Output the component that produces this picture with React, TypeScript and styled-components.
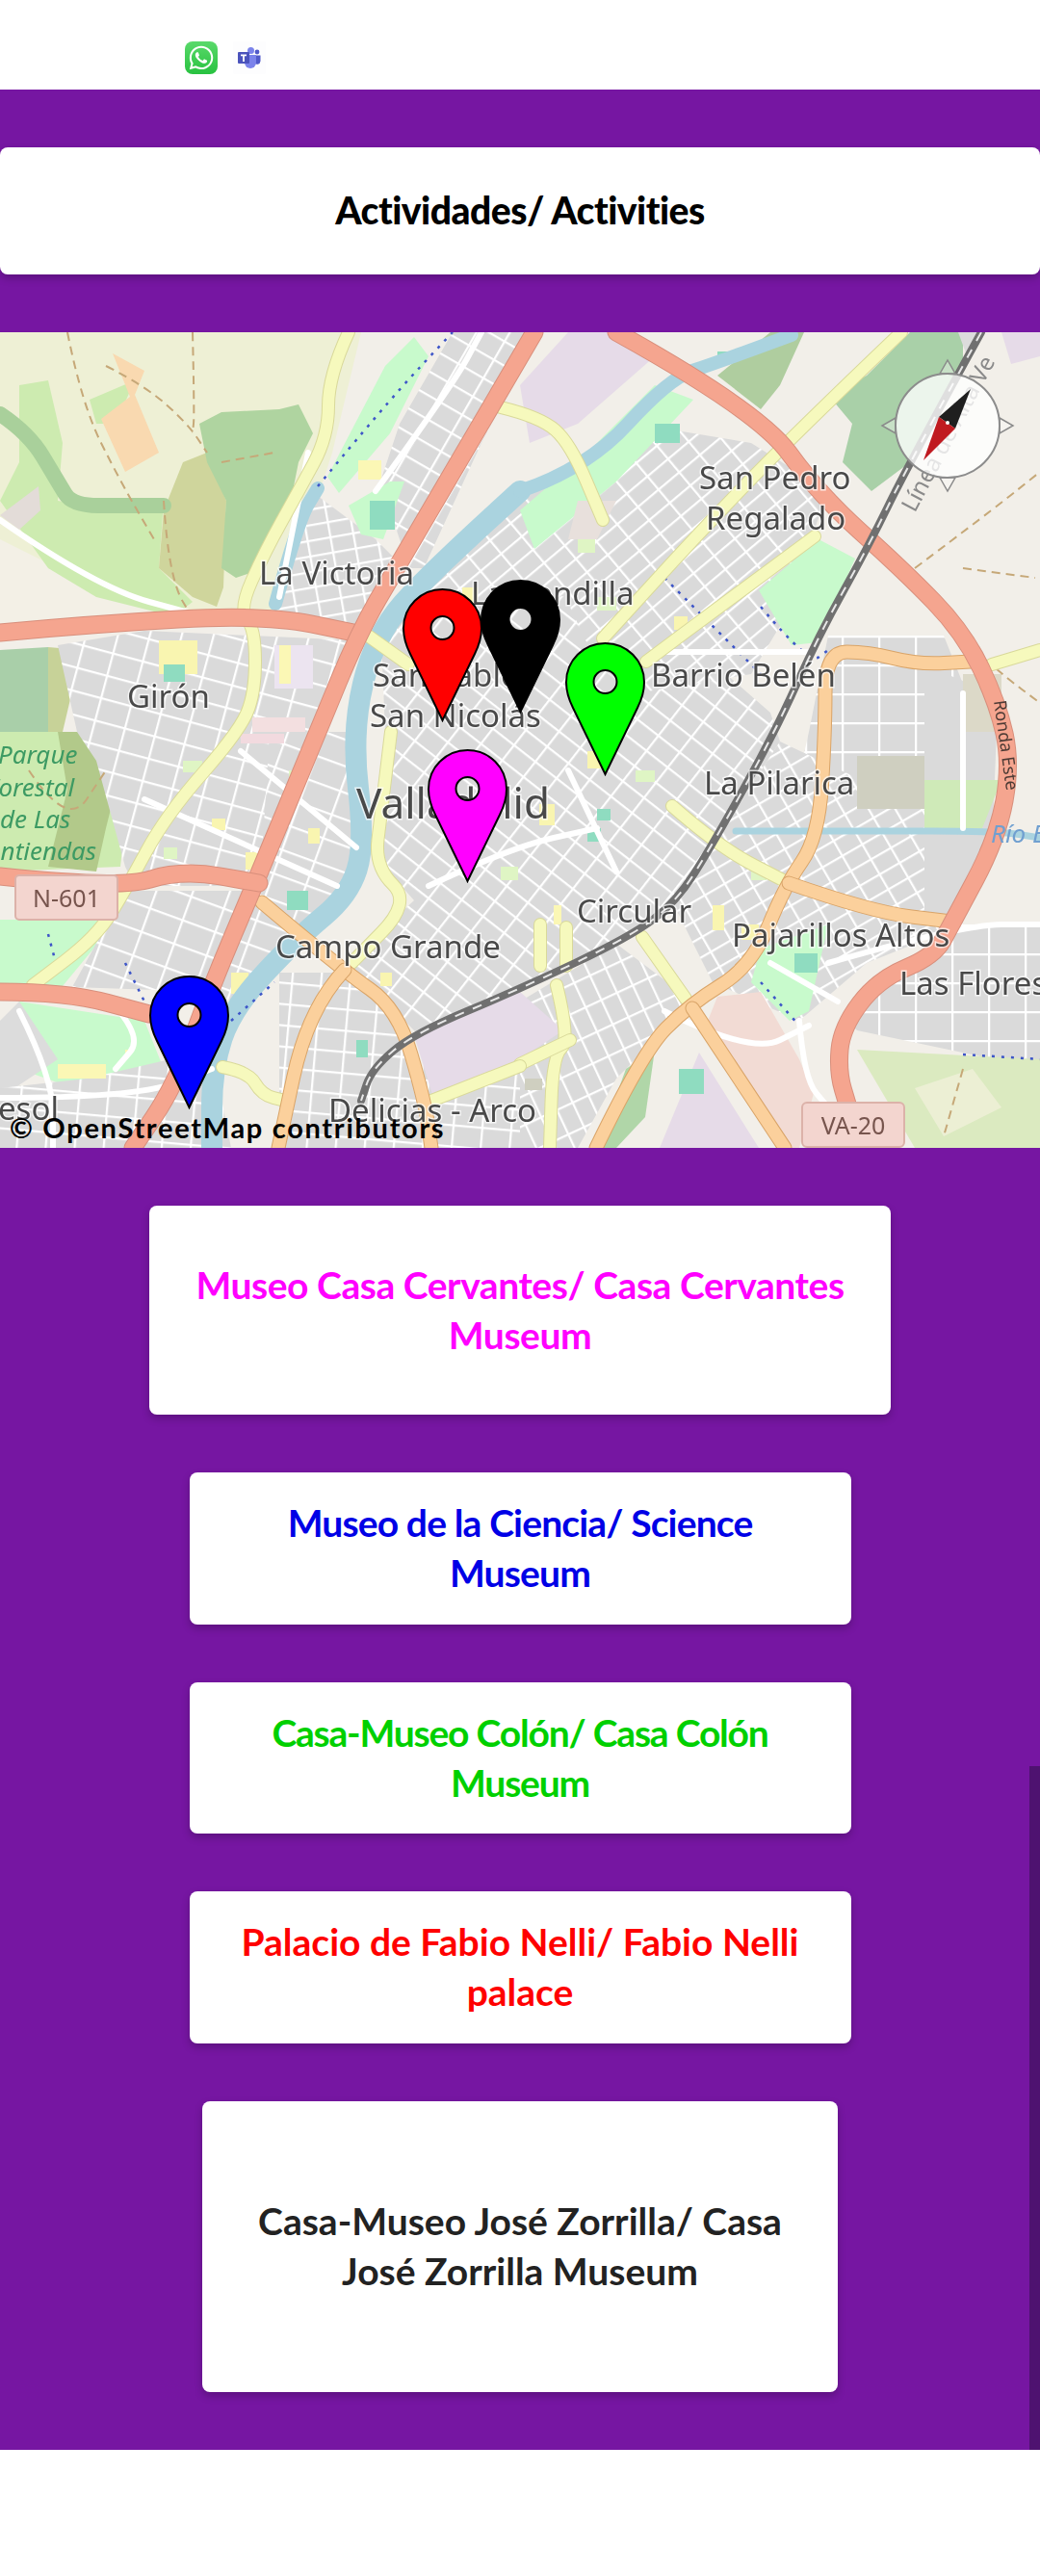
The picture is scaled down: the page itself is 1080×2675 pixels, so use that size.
import React from 'react'
import styled, { createGlobalStyle } from 'styled-components'
import { FaWhatsapp } from 'react-icons/fa'

const GlobalStyle = createGlobalStyle`
	html, body {
		margin: 0;
		background: #fff;
	}
`

const Page = styled.div`
	min-height: 2675px;
	background: #fff;
	font-family: 'Lato', 'Liberation Sans', sans-serif;
`

const Header = styled.header`
	align-items: flex-start;
	box-sizing: border-box;
	display: flex;
	gap: 16px;
	height: 93px;
	padding-left: 192px;
	padding-top: 43px;
`

const AppIcon = styled.a`
	align-items: center;
	border-radius: 8px;
	display: flex;
	height: 34px;
	justify-content: center;
	width: 34px;
`

const WhatsApp = styled(AppIcon)`
	background: linear-gradient(#5ad96b, #28c240);
	color: #fff;
	font-size: 28px;
`

const Teams = styled(AppIcon)`
	background: #fdfdfe;
	border-radius: 2px;
`

const Content = styled.main`
	align-items: center;
	background: #7616a2;
	display: flex;
	flex-direction: column;
	gap: 60px;
	padding-block: 60px;
	position: relative;
`

const Card = styled.div<{ $width: string; $height: number; $color: string; $tracking: number }>`
	align-items: center;
	background: #fff;
	border-radius: 8px;
	box-shadow: 0 4px 8px rgba(0, 0, 0, 0.22);
	box-sizing: border-box;
	color: ${(p) => p.$color};
	display: flex;
	flex-direction: column;
	font-size: 39px;
	font-weight: 700;
	height: ${(p) => p.$height}px;
	justify-content: center;
	letter-spacing: ${(p) => p.$tracking}px;
	line-height: 52px;
	padding-bottom: 2px;
	text-align: center;
	width: ${(p) => p.$width};
`

const CardLine = styled.span`
	display: block;
	white-space: nowrap;
`

const TitleCard = styled(Card)`
	font-weight: 900;
`

const ScrollThumb = styled.div`
	background: #4e1270;
	bottom: 0;
	position: absolute;
	right: 0;
	top: 1741px;
	width: 11px;
`

const MapFrame = styled.section`
	height: 847px;
	overflow: hidden;
	position: relative;
	width: 100%;
`

const MapCanvas = styled.svg`
	display: block;
	height: 847px;
	width: 1080px;
`

const Road = styled.path<{ $color: string; $width: number; $dash?: string }>`
	fill: none;
	stroke: ${(p) => p.$color};
	stroke-dasharray: ${(p) => p.$dash || 'none'};
	stroke-linecap: ${(p) => (p.$dash ? 'butt' : 'round')};
	stroke-linejoin: round;
	stroke-width: ${(p) => p.$width};
`

const PlaceName = styled.text<{ $size?: number }>`
	fill: #4a4a4a;
	font-family: 'Noto Sans', sans-serif;
	font-size: ${(p) => p.$size || 33}px;
	paint-order: stroke;
	stroke: rgba(255, 255, 255, 0.7);
	stroke-width: 3px;
`

const ParkName = styled.text`
	fill: #3c9a63;
	font-family: 'Noto Sans', sans-serif;
	font-size: 26px;
	font-style: italic;
`

const RiverName = styled(ParkName)`
	fill: #6f9fd0;
`

const LineName = styled.text<{ $color: string; $size: number }>`
	fill: ${(p) => p.$color};
	font-family: 'Noto Sans', sans-serif;
	font-size: ${(p) => p.$size}px;
`

const ShieldText = styled.text`
	fill: #77544e;
	font-family: 'Noto Sans', sans-serif;
	font-size: 25px;
	text-anchor: middle;
`

const PinIcon = styled.svg<{ $x: number; $y: number }>`
	height: 139px;
	left: ${(p) => p.$x}px;
	position: absolute;
	top: ${(p) => p.$y - 345}px;
	width: 83px;
`

const Compass = styled.svg`
	height: 140px;
	left: 914px;
	position: absolute;
	top: 27px;
	width: 140px;
`

const Attribution = styled.div`
	bottom: 3px;
	color: #000;
	font-family: 'Lato', sans-serif;
	font-size: 29px;
	font-weight: 700;
	left: 10px;
	letter-spacing: 1.7px;
	line-height: 36px;
	position: absolute;
	white-space: nowrap;
`

// draws a list of points as a soft curve through the midpoints
const smooth = (pts: number[][]) => {
	let d = `M${pts[0][0]} ${pts[0][1]}`
	for (let i = 1; i < pts.length - 1; i++) {
		const mx = (pts[i][0] + pts[i + 1][0]) / 2
		const my = (pts[i][1] + pts[i + 1][1]) / 2
		d += ` Q${pts[i][0]} ${pts[i][1]} ${mx} ${my}`
	}
	const last = pts[pts.length - 1]
	return `${d} L${last[0]} ${last[1]}`
}

const shape = (pts: string) => `M${pts}Z`

const hatches = [
	{ id: 'h1', angle: -10, w: 24, h: 16 },
	{ id: 'h2', angle: 30, w: 30, h: 22 },
	{ id: 'h3', angle: 15, w: 32, h: 24 },
	{ id: 'h4', angle: 20, w: 36, h: 26 },
	{ id: 'h5', angle: 38, w: 28, h: 20 },
	{ id: 'h6', angle: -40, w: 28, h: 18 },
	{ id: 'h7', angle: 0, w: 38, h: 30 },
	{ id: 'h8', angle: -30, w: 24, h: 18 },
	{ id: 'h9', angle: -25, w: 18, h: 28 },
	{ id: 'h10', angle: 5, w: 30, h: 22 },
]

const districts = [
	['h1', '300,560 330,515 390,560 420,590 375,655 280,640'],
	['h2', '395,500 415,440 470,345 560,345 500,460 440,590 425,590'],
	['h3', '60,670 150,655 370,665 340,760 250,920 140,920 130,900 100,790 80,760'],
	['h4', '130,925 265,925 220,1030 75,1025'],
	['h4', '280,760 365,760 380,880 360,930 300,980 240,1040 225,1030 270,920'],
	['h5', '395,640 640,600 800,740 810,770 700,940 650,975 540,1030 440,1080 400,1040 360,1000 430,935 390,890 400,760'],
	['h6', '540,520 620,500 690,445 780,460 860,510 810,650 780,700 660,720 620,690'],
	['h6', '440,590 540,510 620,500 640,610 395,650'],
	['h7', '860,660 980,660 1020,760 1000,850 820,850 840,760'],
	['h8', '700,940 810,770 1000,860 1000,960 900,1000 830,1060 740,1020'],
	['h7', '990,960 1080,960 1080,1110 890,1070 880,1060 950,1000'],
	['h9', '540,1040 640,980 720,1040 640,1120 600,1192 540,1192'],
	['h10', '290,1010 360,1010 420,1060 440,1192 290,1192'],
	['h10', '0,1130 90,1120 220,1090 240,1192 0,1192'],
	['h10', '440,1080 540,1030 540,1192 440,1192'],
]

const areas = [
	// rural west
	['#eef0d5', '0,345 375,345 345,470 290,640 0,660'],
	['#f3f0e6', '0,560 120,620 230,640 0,655'],
	['#cdebb0', '0,520 20,480 20,400 50,395 65,460 60,520 120,530 170,520 165,590 200,625 180,640 100,620 50,590'],
	['#cdebb0', '93,415 140,395 120,440 100,440'],
	['#cfd59c', '190,480 215,470 235,520 232,610 225,630 200,620 165,590 170,530'],
	['#afd4a0', '207,440 230,428 290,425 310,420 325,450 310,480 300,530 275,590 245,600 230,590 235,520 215,480'],
	['#f9d9b0', '117,367 150,385 140,410 165,470 130,490 105,435 135,412'],
	['#e3dcd8', '0,535 40,505 42,530 20,550'],
	// west below the ring
	['#a9cfa9', '0,675 50,672 50,760 0,760'],
	['#c7d298', '50,672 85,675 65,760 50,760'],
	['#cdebb0', '0,760 140,760 125,900 0,905'],
	['#b2c98a', '60,760 135,760 110,860 100,905 50,900 70,820'],
	['#c8facc', '0,955 122,955 60,1030 0,1030'],
	['#c8facc', '20,1040 150,1060 170,1110 90,1135 20,1110'],
	['#dcdcdc', '0,1060 20,1040 60,1100 0,1140'],
	// parks and special land
	['#e6dbe8', '540,400 590,345 650,345 680,370 600,440 550,460'],
	['#c8facc', '540,530 610,470 680,400 720,415 640,500 555,570'],
	['#c8facc', '340,495 400,380 430,350 445,370 405,450 352,512'],
	['#c8facc', '362,525 405,500 420,500 398,560 375,555'],
	['#c8facc', '788,613 850,560 888,580 850,667 822,670'],
	['#e8e0dc', '600,520 640,520 620,560 590,560'],
	['#a9d0a8', '945,345 1000,345 1000,380 945,480 905,510 875,480 885,440 860,410 900,390'],
	['#afcd9f', '745,390 800,345 835,345 810,400 790,425'],
	['#e6dbe8', '1040,345 1080,345 1080,370 1050,378'],
	['#dcdcdc', '995,345 1020,345 1005,372'],
	['#dadada', '960,690 1030,720 1035,760 1030,880 1000,950 960,950'],
	['#cfeab8', '960,810 1040,810 1020,860 960,860'],
	['#cfcfc0', '890,785 960,785 960,840 890,840'],
	['#e6dbe8', '430,1075 540,1030 540,1105 450,1140'],
	['#e6dbe8', '540,1030 585,1070 540,1100'],
	['#e6dbe8', '685,1192 726,1093 788,1192'],
	['#f2dbd4', '745,1035 790,1030 830,1100 845,1135 830,1192 810,1192 735,1060'],
	['#c8facc', '790,985 860,960 840,1050 820,1060 780,1020'],
	['#dbeac0', '890,1090 1080,1100 1080,1192 950,1192'],
	['#ecefd4', '950,1130 1010,1110 1040,1150 980,1180'],
	['#dcd9c8', '1000,700 1040,700 1040,760 1000,760'],
	['#b0d6a8', '650,1110 680,1090 670,1160 640,1192 620,1192'],
]

const spots = [
	['#fbf7b5', 372, 478, 24, 20],
	['#8fdcc0', 384, 520, 26, 30],
	['#f9f5b0', 165, 665, 40, 35],
	['#8fdcc0', 170, 690, 22, 18],
	['#ece4f0', 285, 670, 40, 45],
	['#f3dfe0', 262, 745, 55, 15],
	['#fbf7b5', 290, 670, 12, 40],
	['#8fdcc0', 745, 365, 20, 8],
	['#8fdcc0', 680, 440, 26, 20],
	['#fbf7b5', 130, 1090, 6, 6],
	['#fbf7b5', 60, 1105, 50, 15],
	['#f9f5b0', 240, 1010, 18, 22],
	['#f9f5b0', 255, 885, 16, 18],
	['#8fdcc0', 298, 925, 22, 20],
	['#f9f5b0', 560, 835, 16, 22],
	['#8fdcc0', 610, 860, 14, 14],
	['#f9f5b0', 740, 940, 12, 26],
	['#8fdcc0', 825, 990, 24, 20],
	['#8fdcc0', 705, 1110, 26, 26],
	['#fbf7b5', 575, 940, 8, 20],
	['#8fdcc0', 370, 1080, 12, 18],
	['#f9f5b0', 395, 1010, 12, 14],
	['#f2dadf', 250, 762, 45, 10],
	['#cfcfc0', 545, 1120, 18, 12],
	['#dff5c4', 440, 700, 16, 14],
	['#f9f5b0', 470, 790, 14, 12],
	['#dff5c4', 520, 900, 18, 14],
	['#f9f5b0', 610, 780, 14, 18],
	['#dff5c4', 660, 800, 20, 12],
	['#8fdcc0', 620, 840, 14, 12],
	['#dff5c4', 780, 900, 16, 14],
	['#f9f5b0', 770, 960, 18, 16],
	['#dff5c4', 300, 800, 16, 14],
	['#f9f5b0', 220, 850, 14, 12],
	['#dff5c4', 190, 790, 20, 12],
	['#f9f5b0', 320, 860, 12, 16],
	['#dff5c4', 170, 880, 14, 12],
	['#dff5c4', 620, 620, 20, 14],
	['#f9f5b0', 700, 640, 14, 14],
	['#dff5c4', 600, 560, 18, 14],
	['#f9f5b0', 480, 610, 16, 18],
	['#dff5c4', 495, 640, 14, 12],
]

const tracks = [
	[[70, 345], [85, 420], [125, 500], [160, 560]],
	[[200, 345], [202, 430], [200, 450]],
	[[110, 380], [150, 400], [195, 440], [215, 470]],
	[[170, 520], [175, 600], [205, 650]],
	[[230, 480], [285, 470]],
	[[1000, 590], [1075, 600]],
	[[950, 590], [1030, 530], [1080, 490]],
	[[1000, 665], [1040, 700], [1080, 730]],
	[[1000, 1110], [980, 1180]],
	[[30, 800], [70, 860], [110, 800]],
]

const rivers = [
	{ w: 22, pts: [[540, 510], [448, 593], [389, 660], [365, 760], [379, 877], [362, 930], [310, 973], [241, 1047], [220, 1110], [220, 1192]] },
	{ w: 14, pts: [[540, 510], [609, 487], [695, 393], [743, 377], [822, 348]] },
	{ w: 14, pts: [[286, 627], [310, 540], [330, 507]] },
	{ w: 7, pts: [[764, 863], [900, 863], [1036, 863], [1080, 870]] },
]

const dotted = [
	[[330, 505], [400, 420], [470, 345]],
	[[690, 600], [745, 655], [790, 700]],
	[[790, 630], [840, 690], [860, 675]],
	[[50, 970], [58, 1000]],
	[[130, 1000], [150, 1040]],
	[[240, 1060], [285, 1020]],
	[[790, 1020], [830, 1065]],
	[[1000, 1095], [1080, 1100]],
]

const whiteRoads = [
	[[685, 677], [843, 677]],
	[[390, 510], [470, 400], [500, 345]],
	[[20, 1050], [55, 1120], [55, 1192]],
	[[0, 1140], [140, 1140], [220, 1110]],
	[[110, 1035], [150, 1075], [120, 1110]],
	[[290, 620], [320, 470]],
	[[0, 540], [100, 610], [210, 640]],
	[[690, 1050], [780, 1095], [840, 1065]],
	[[830, 1060], [835, 1120], [860, 1150]],
	[[860, 1000], [1000, 960], [1080, 960]],
	[[1000, 860], [1000, 720]],
	[[870, 1040], [800, 1000]],
	[[445, 920], [530, 880], [620, 860]],
	[[590, 800], [640, 905]],
	[[150, 830], [350, 920]],
	[[250, 780], [370, 880]],
]

const yellowRoads = [
	[[362, 345], [341, 390], [341, 453], [310, 510], [275, 573], [248, 633], [265, 653], [265, 720], [248, 760], [172, 847], [131, 923], [100, 973], [34, 1023]],
	[[382, 660], [424, 690]],
	[[520, 423], [561, 433], [592, 460], [626, 540]],
	[[936, 345], [826, 450], [729, 550], [626, 663]],
	[[846, 557], [747, 630], [671, 687]],
	[[698, 837], [747, 880], [819, 917]],
	[[667, 973], [712, 1037]],
	[[561, 960], [561, 1003]],
	[[588, 963], [588, 1003]],
	[[578, 1023], [592, 1080], [574, 1097], [571, 1192]],
	[[592, 1080], [540, 1105]],
	[[406, 760], [396, 843], [389, 900], [427, 937], [365, 1000]],
	[[448, 1143], [540, 1107]],
	[[231, 1108], [258, 1113], [272, 1137], [296, 1143]],
	[[1080, 675], [1030, 690]],
]

const orangeRoads = [
	[[272, 937], [355, 1007], [413, 1047], [441, 1143], [448, 1192]],
	[[358, 1007], [320, 1047], [289, 1192]],
	[[619, 1192], [667, 1093], [716, 1043], [781, 1003], [815, 920], [850, 870], [857, 760], [857, 677], [902, 677], [953, 690], [1008, 687]],
	[[819, 917], [905, 947], [988, 957]],
	[[719, 1047], [815, 1192]],
]

const motorways = [
	[[0, 657], [96, 648], [275, 638], [372, 658]],
	[[555, 345], [413, 587], [372, 658], [330, 760], [265, 917], [220, 1023], [182, 1127], [138, 1192]],
	[[640, 345], [788, 427], [850, 513], [939, 593], [1001, 657], [1036, 730], [1050, 793], [1036, 870], [988, 960], [970, 993], [912, 1017], [874, 1067], [870, 1113], [881, 1150]],
	[[0, 910], [124, 923], [189, 903], [269, 917]],
	[[0, 1030], [69, 1030], [155, 1053]],
]

const railway = [[1019, 345], [943, 483], [902, 567], [850, 660], [805, 760], [740, 877], [702, 937], [654, 973], [540, 1027], [430, 1073], [386, 1110], [375, 1143]]

const places: [string, number, number, number?][] = [
	['La Victoria', 269, 607],
	['Girón', 132, 735],
	['San Pedro', 726, 508],
	['Regalado', 733, 550],
	['La Rondilla', 489, 628],
	['San Pablo', 387, 713],
	['San Nicolás', 384, 755],
	['Barrio Belén', 676, 713],
	['Valladolid', 370, 850, 44],
	['Campo Grande', 286, 995],
	['La Pilarica', 731, 825],
	['Circular', 599, 958],
	['Pajarillos Altos', 760, 983],
	['Las Flores', 934, 1033],
	['Delicias - Arco', 341, 1165],
	['esol', -2, 1163],
]

const parkNames: [string, number, number][] = [
	['Parque', -2, 793],
	['Forestal', -14, 827],
	['de Las', 0, 860],
	['Antiendas', -14, 893],
]

const MapDrawing = () => (
	<MapCanvas viewBox="0 345 1080 847">
		<defs>
			{hatches.map((h) => (
				<pattern
					key={h.id}
					id={h.id}
					patternUnits="userSpaceOnUse"
					width={h.w}
					height={h.h}
					patternTransform={`rotate(${h.angle})`}
				>
					<rect width={h.w} height={h.h} fill="#dadada" />
					<path d={`M0 0H${h.w}M0 0V${h.h}`} stroke="#fff" strokeWidth="4.5" fill="none" />
				</pattern>
			))}
			<filter id="tileBlur">
				<feGaussianBlur stdDeviation="0.7" />
			</filter>
		</defs>
		<g filter="url(#tileBlur)">
			<rect x="0" y="345" width="1080" height="847" fill="#f2efe9" />
			{areas.slice(0, 15).map((a, i) => (
				<path key={i} d={shape(a[1])} fill={a[0]} />
			))}
			<Road d={smooth([[0, 430], [30, 450], [60, 500], [75, 525], [130, 525], [170, 525]])} $color="#a9d09b" $width={16} />
			{districts.map((d, i) => (
				<path key={i} d={shape(d[1])} fill={`url(#${d[0]})`} />
			))}
			{areas.slice(15).map((a, i) => (
				<path key={i} d={shape(a[1])} fill={a[0]} />
			))}
			{spots.map((s, i) => (
				<rect key={i} x={s[1]} y={s[2]} width={s[3]} height={s[4]} fill={s[0] as string} />
			))}
			{tracks.map((t, i) => (
				<Road key={i} d={smooth(t)} $color="#c6a878" $width={2} $dash="9 6" />
			))}
			{rivers.map((r, i) => (
				<Road key={i} d={smooth(r.pts)} $color="#aad3df" $width={r.w} />
			))}
			{dotted.map((t, i) => (
				<Road key={i} d={smooth(t)} $color="#3d55c8" $width={2.5} $dash="3 7" />
			))}
			{whiteRoads.map((t, i) => (
				<Road key={i} d={smooth(t)} $color="#fff" $width={6} />
			))}
			{yellowRoads.map((t, i) => (
				<g key={i}>
					<Road d={smooth(t)} $color="#d9d99a" $width={14} />
					<Road d={smooth(t)} $color="#f6f9bd" $width={12} />
				</g>
			))}
			{orangeRoads.map((t, i) => (
				<g key={i}>
					<Road d={smooth(t)} $color="#d9a468" $width={15} />
					<Road d={smooth(t)} $color="#fbd09c" $width={13} />
				</g>
			))}
			{motorways.map((t, i) => (
				<g key={i}>
					<Road d={smooth(t)} $color="#d88f7c" $width={19} />
					<Road d={smooth(t)} $color="#f5a58f" $width={17} />
				</g>
			))}
			<Road d={smooth(railway)} $color="#707070" $width={8} />
			<Road d={smooth(railway)} $color="#e8e8e8" $width={2} $dash="10 10" />
			<g>
				<rect x="16" y="909" width="106" height="46" rx="4" fill="#f3d5cf" stroke="#dcb2a9" strokeWidth="2" />
				<ShieldText x="69" y="942">N-601</ShieldText>
				<rect x="833" y="1145" width="106" height="46" rx="5" fill="#f3d5cf" stroke="#dcb2a9" strokeWidth="2" />
				<ShieldText x="886" y="1178">VA-20</ShieldText>
			</g>
			{places.map(([name, x, y, size]) => (
				<PlaceName key={name} x={x} y={y} $size={size}>
					{name}
				</PlaceName>
			))}
			{parkNames.map(([name, x, y]) => (
				<ParkName key={name} x={x} y={y}>
					{name}
				</ParkName>
			))}
			<RiverName x="1029" y="875">Río E</RiverName>
			<LineName x="0" y="0" $color="#8a8a8a" $size={24} transform="translate(950 533) rotate(-62)">
				Línea de Alta Ve
			</LineName>
			<LineName x="0" y="0" $color="#4d3a34" $size={18} transform="translate(1032 728) rotate(82)">
				Ronda Este
			</LineName>
		</g>
	</MapCanvas>
)

const Pin = ({ x, y, color }: { x: number; y: number; color: string }) => (
	<PinIcon $x={x} $y={y} viewBox="0 0 83 139">
		<path
			fillRule="evenodd"
			fill={color}
			stroke="#000"
			strokeWidth="2"
			d="M41.5 1C19 1 1 19 1 41.5C1 52 4 60 8 68L41.5 137L75 68C79 60 82 52 82 41.5C82 19 64 1 41.5 1ZM41.5 29a12 12 0 1 1 0 24a12 12 0 1 1 0-24Z"
		/>
	</PinIcon>
)

const CompassRose = () => (
	<Compass viewBox="0 0 140 140">
		<g fill="rgba(255,255,255,0.35)" stroke="#8a8a8a" strokeWidth="1.5">
			<path d="M62 16L70 2L78 16Z" />
			<path d="M62 124L70 138L78 124Z" />
			<path d="M16 62L2 70L16 78Z" />
			<path d="M124 62L138 70L124 78Z" />
		</g>
		<circle cx="70" cy="70" r="54" fill="rgba(255,255,255,0.78)" stroke="#8c8c8c" strokeWidth="2" />
		<path d="M94 32L61 61L78 73Z" fill="#1f1f1f" />
		<path d="M45 106L61 61L78 73Z" fill="#c01a20" />
		<circle cx="70" cy="67" r="2" fill="#fff" />
	</Compass>
)

const TeamsLogo = () => (
	<svg width="24" height="22" viewBox="0 0 24 22">
		<circle cx="20" cy="5" r="2.4" fill="#5059c9" />
		<path d="M17 8.5h6.5v6a3.5 3.5 0 0 1-6.5 1.5Z" fill="#5059c9" />
		<circle cx="13.5" cy="3.5" r="3.5" fill="#7b83eb" />
		<path d="M7 8h12v8a6 6 0 0 1-12 0Z" fill="#7b83eb" />
		<rect x="0" y="5" width="12" height="12" rx="1" fill="#4b53bc" />
		<path d="M3 7.6h6v1.6H6.9V15H5.1V9.2H3Z" fill="#fff" />
	</svg>
)

const cards = [
	{ lines: ['Museo Casa Cervantes/ Casa Cervantes', 'Museum'], color: '#ff00ff', width: 770, height: 217, tracking: -0.45 },
	{ lines: ['Museo de la Ciencia/ Science', 'Museum'], color: '#0000e6', width: 687, height: 158, tracking: -0.85 },
	{ lines: ['Casa-Museo Colón/ Casa Colón', 'Museum'], color: '#00d000', width: 687, height: 157, tracking: -1.2 },
	{ lines: ['Palacio de Fabio Nelli/ Fabio Nelli', 'palace'], color: '#ff0000', width: 687, height: 158, tracking: 0 },
	{ lines: ['Casa-Museo José Zorrilla/ Casa', 'José Zorrilla Museum'], color: '#222222', width: 660, height: 302, tracking: 0 },
]

export default function App() {
	return (
		<Page>
			<GlobalStyle />
			<Header>
				<WhatsApp>
					<FaWhatsapp />
				</WhatsApp>
				<Teams>
					<TeamsLogo />
				</Teams>
			</Header>
			<Content>
				<TitleCard $width="100%" $height={132} $color="#000" $tracking={-0.5}>
					Actividades/ Activities
				</TitleCard>
				<MapFrame>
					<MapDrawing />
					<Pin x={155} y={1013} color="#0000ff" />
					<Pin x={418} y={611} color="#ff0000" />
					<Pin x={499} y={602} color="#000000" />
					<Pin x={587} y={667} color="#00ff00" />
					<Pin x={444} y={778} color="#ff00ff" />
					<CompassRose />
					<Attribution>© OpenStreetMap contributors</Attribution>
				</MapFrame>
				{cards.map((card) => (
					<Card key={card.lines[0]} $width={`${card.width}px`} $height={card.height} $color={card.color} $tracking={card.tracking}>
						{card.lines.map((line) => (
							<CardLine key={line}>{line}</CardLine>
						))}
					</Card>
				))}
				<ScrollThumb />
			</Content>
		</Page>
	)
}
